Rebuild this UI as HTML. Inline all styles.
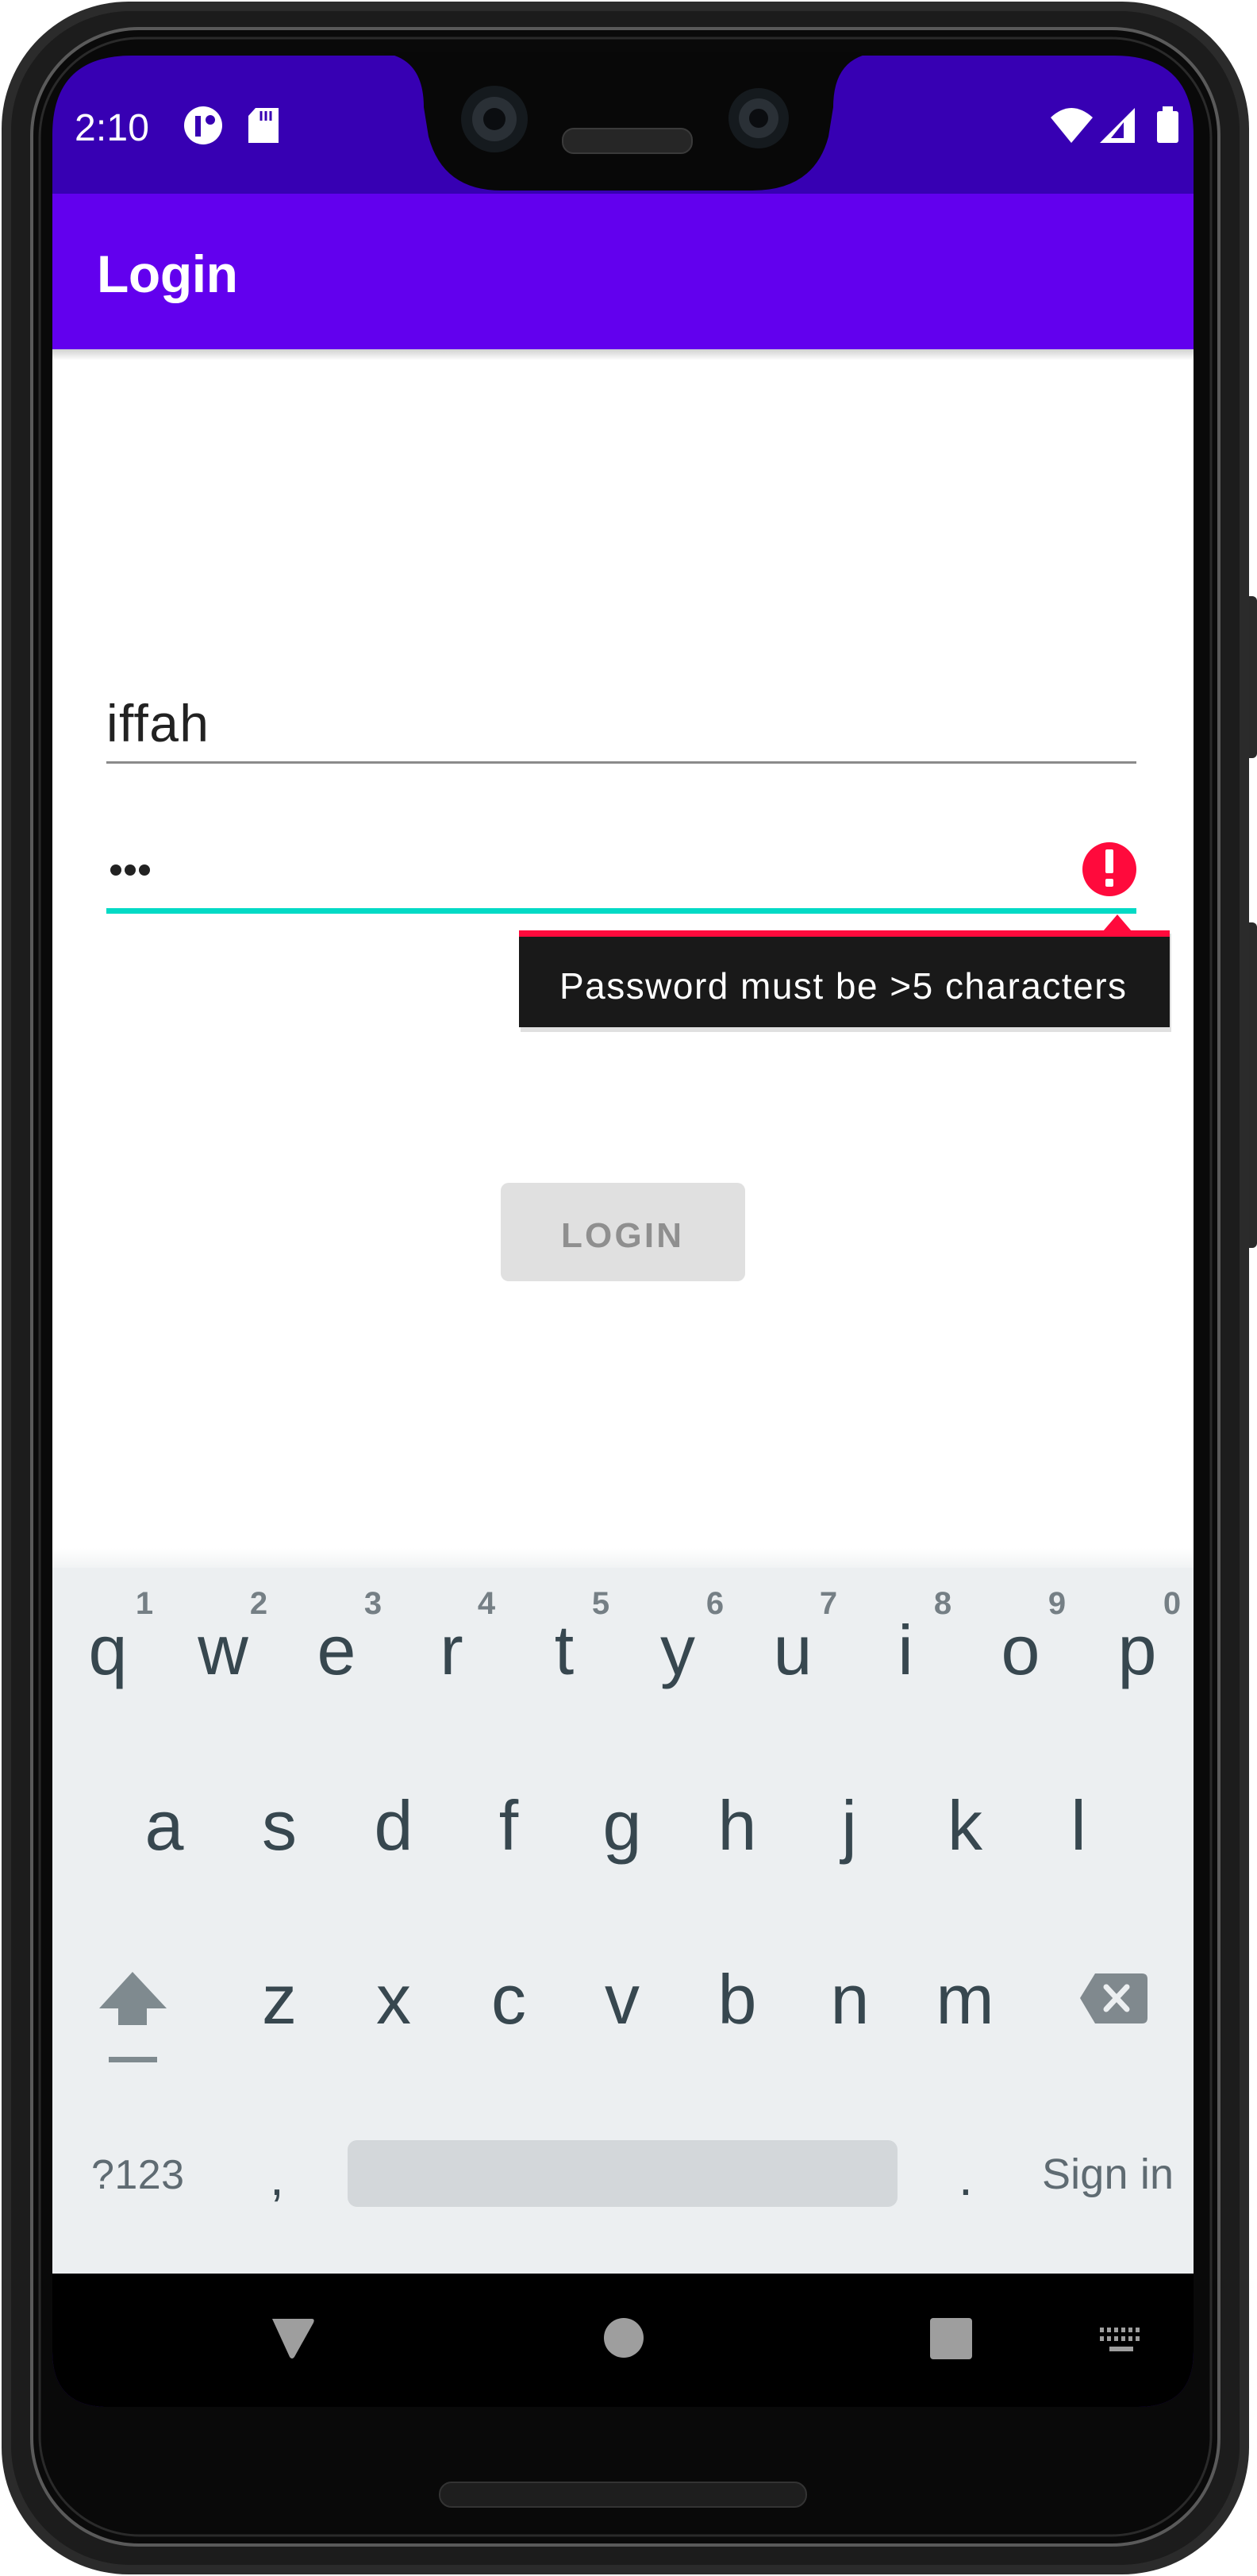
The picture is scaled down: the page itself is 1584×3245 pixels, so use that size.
<!DOCTYPE html>
<html><head><meta charset="utf-8"><style>html,body{margin:0;padding:0;background:#fff}svg{display:block}</style></head>
<body>
<svg width="1584" height="3245" viewBox="0 0 1584 3245" xmlns="http://www.w3.org/2000/svg" font-family="'Liberation Sans', sans-serif">
<defs>
<clipPath id="scr"><path d="M166 70 H1404 Q1504 70 1504 170 V2962 Q1504 3032 1434 3032 H136 Q66 3032 66 2962 V170 Q66 70 166 70 Z"/></clipPath>
<linearGradient id="sh" x1="0" y1="0" x2="0" y2="1"><stop offset="0" stop-color="#000" stop-opacity="0.18"/><stop offset="1" stop-color="#000" stop-opacity="0"/></linearGradient>
<linearGradient id="kb" x1="0" y1="0" x2="0" y2="1"><stop offset="0" stop-color="#fff"/><stop offset="1" stop-color="#f1f3f4"/></linearGradient>
</defs>
<rect x="0" y="0" width="1584" height="3245" fill="#fff"/>
<rect x="1566" y="751" width="18" height="204" rx="6" fill="#2a2a2a"/>
<rect x="1566" y="1162" width="18" height="410" rx="6" fill="#2a2a2a"/>
<rect x="2" y="2" width="1572" height="3241" rx="160" fill="#2b2b2b"/>
<rect x="14" y="14" width="1548" height="3217" rx="150" fill="#1c1c1c"/>
<rect x="40" y="36" width="1496" height="3170" rx="135" fill="#0a0a0a" stroke="#5a5a5a" stroke-width="4"/>
<rect x="50" y="48" width="1476" height="3146" rx="126" fill="#090909" stroke="#2a2a2a" stroke-width="3"/>
<g clip-path="url(#scr)">
<rect x="66" y="70" width="1438" height="2962" fill="#3700B3"/>
<rect x="66" y="244" width="1438" height="196" fill="#6200EE"/>
<rect x="66" y="440" width="1438" height="1535" fill="#fff"/>
<rect x="66" y="440" width="1438" height="14" fill="url(#sh)"/>
<rect x="66" y="1950" width="1438" height="25" fill="url(#kb)"/>
<rect x="66" y="1975" width="1438" height="889" fill="#ECEFF1"/>
<rect x="66" y="2864" width="1438" height="170" fill="#000"/>
</g>
<path d="M470 66 Q534 66 534 135 L540 172 Q558 240 632 240 L948 240 Q1026 240 1044 172 L1050 135 Q1050 66 1114 66 Z" fill="#080808"/>
<circle cx="623" cy="150" r="42" fill="#151a1e"/>
<circle cx="623" cy="150" r="28" fill="#2a3036"/>
<circle cx="623" cy="150" r="14" fill="#0b0d10"/>
<circle cx="956" cy="149" r="38" fill="#151a1e"/>
<circle cx="956" cy="149" r="25" fill="#2a3036"/>
<circle cx="956" cy="149" r="12" fill="#0b0d10"/>
<rect x="709" y="162" width="163" height="31" rx="14" fill="#262626" stroke="#3a3a3a" stroke-width="2"/>
<text x="94" y="177" font-size="48" fill="#fff" textLength="94">2:10</text>
<circle cx="256" cy="158" r="24" fill="#fff"/>
<rect x="246" y="146" width="7" height="26" fill="#3700B3"/>
<circle cx="265" cy="151" r="6" fill="#3700B3"/>
<path d="M322 136 H351 V180 H313 V146 Z" fill="#fff"/>
<path d="M329 140 V152 M335 140 V152 M341 140 V152" stroke="#3700B3" stroke-width="3"/>
<path d="M1324 148 Q1350 124 1377 148 L1350 180 Z" fill="#fff"/>
<path d="M1430 136 V180 H1386 Z" fill="#fff"/>
<path d="M1416 154 V174 H1400 Z" fill="#3700B3"/>
<rect x="1458" y="140" width="27" height="40" rx="3" fill="#fff"/>
<rect x="1465" y="134" width="13" height="8" fill="#fff"/>
<text x="122" y="368" font-size="66" font-weight="bold" fill="#fff" textLength="178">Login</text>
<text x="134" y="934" font-size="66" fill="#222" textLength="129">iffah</text>
<rect x="134" y="959" width="1298" height="3" fill="#8a8a8a"/>
<circle cx="146" cy="1096" r="7" fill="#222"/>
<circle cx="164" cy="1096" r="7" fill="#222"/>
<circle cx="182" cy="1096" r="7" fill="#222"/>
<circle cx="1398" cy="1095" r="34" fill="#FF0A3C"/>
<rect x="1393" y="1070" width="10" height="30" rx="2" fill="#fff"/>
<rect x="1393" y="1107" width="10" height="10" rx="2" fill="#fff"/>
<rect x="134" y="1144" width="1298" height="7" fill="#03DAC5"/>
<rect x="656" y="1176" width="820" height="124" fill="#000" opacity="0.12"/>
<rect x="654" y="1172" width="820" height="122" fill="#191919"/>
<rect x="654" y="1172" width="820" height="8" fill="#FF0A3C"/>
<path d="M1390 1173 L1408 1152 L1426 1173 Z" fill="#FF0A3C"/>
<text x="705" y="1258" font-size="46" fill="#fff" textLength="714">Password must be &gt;5 characters</text>
<rect x="631" y="1490" width="308" height="124" rx="10" fill="#E0E0E0"/>
<text x="707" y="1571" font-size="44" font-weight="bold" fill="#8f8f8f" textLength="157" letter-spacing="5">LOGIN</text>
<g font-size="40" font-weight="bold" fill="#757F85" text-anchor="middle">
<text x="182" y="2033">1</text><text x="326" y="2033">2</text><text x="470" y="2033">3</text><text x="613" y="2033">4</text><text x="757" y="2033">5</text><text x="901" y="2033">6</text><text x="1044" y="2033">7</text><text x="1188" y="2033">8</text><text x="1332" y="2033">9</text><text x="1477" y="2033">0</text>
</g>
<g font-size="88" fill="#37474F" text-anchor="middle">
<text x="136" y="2109">q</text><text x="281" y="2109">w</text><text x="424" y="2109">e</text><text x="569" y="2109">r</text><text x="711" y="2109">t</text><text x="854" y="2109">y</text><text x="999" y="2109">u</text><text x="1141" y="2109">i</text><text x="1286" y="2109">o</text><text x="1433" y="2109">p</text>
<text x="207" y="2330">a</text><text x="352" y="2330">s</text><text x="496" y="2330">d</text><text x="641" y="2330">f</text><text x="784" y="2330">g</text><text x="929" y="2330">h</text><text x="1070" y="2330">j</text><text x="1216" y="2330">k</text><text x="1359" y="2330">l</text>
<text x="352" y="2549">z</text><text x="496" y="2549">x</text><text x="641" y="2549">c</text><text x="784" y="2549">v</text><text x="929" y="2549">b</text><text x="1071" y="2549">n</text><text x="1216" y="2549">m</text>
</g>
<path d="M167 2484 L210 2530 H185 V2551 H149 V2530 H125 Z" fill="#7F8A8F"/>
<rect x="137" y="2591" width="61" height="7" fill="#7F8A8F"/>
<path d="M1380 2486 H1439 Q1446 2486 1446 2493 V2542 Q1446 2549 1439 2549 H1380 L1361 2517 Z" fill="#80898E"/>
<path d="M1394 2503 L1420 2531 M1420 2503 L1394 2531" stroke="#ECEFF1" stroke-width="7" stroke-linecap="round"/>
<text x="115" y="2757" font-size="52" fill="#5f6b72" textLength="117">?123</text>
<text x="340" y="2765" font-size="64" fill="#37474F">,</text>
<rect x="438" y="2696" width="693" height="84" rx="12" fill="#D3D7DA"/>
<text x="1208" y="2765" font-size="64" fill="#37474F">.</text>
<text x="1313" y="2757" font-size="54" fill="#5f6b72" textLength="166">Sign in</text>
<path d="M343 2921 H393 Q397 2921 395 2926 L371 2969 Q368 2973 365 2969 Z" fill="#9e9e9e"/>
<circle cx="786" cy="2945" r="25" fill="#9e9e9e"/>
<rect x="1172" y="2920" width="53" height="52" rx="4" fill="#9e9e9e"/>
<g fill="#9e9e9e">
<rect x="1386" y="2932" width="5" height="6"/><rect x="1395" y="2932" width="5" height="6"/><rect x="1404" y="2932" width="5" height="6"/><rect x="1413" y="2932" width="5" height="6"/><rect x="1422" y="2932" width="5" height="6"/><rect x="1431" y="2932" width="5" height="6"/>
<rect x="1386" y="2943" width="5" height="6"/><rect x="1395" y="2943" width="5" height="6"/><rect x="1404" y="2943" width="5" height="6"/><rect x="1413" y="2943" width="5" height="6"/><rect x="1422" y="2943" width="5" height="6"/><rect x="1431" y="2943" width="5" height="6"/>
<rect x="1398" y="2956" width="30" height="6"/>
</g>
<rect x="554" y="3127" width="462" height="31" rx="15" fill="#1e1e1e" stroke="#333" stroke-width="2"/>
</svg>
</body></html>
